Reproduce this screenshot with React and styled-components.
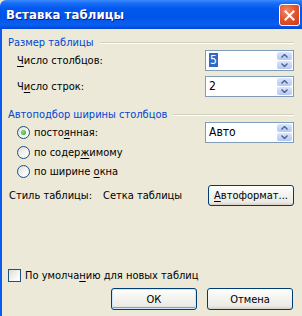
import styled, { createGlobalStyle } from 'styled-components';

const GlobalStyle = createGlobalStyle`
    html, body {
        margin: 0;
        padding: 0;
        background: #ece9d8;
    }
    #root {
        width: 302px;
        height: 316px;
        overflow: hidden;
    }
`;

const FONT = `"DejaVu Sans Condensed", "DejaVu Sans", "Liberation Sans", sans-serif`;

const Window = styled.div`
    position: relative;
    width: 302px;
    height: 316px;
    display: flex;
    flex-direction: column;
    font-family: ${FONT};
    font-size: 11px;
    color: #000;
    overflow: hidden;
`;

const TitleBar = styled.div`
    height: 29px;
    flex: none;
    display: flex;
    align-items: center;
    justify-content: space-between;
    padding: 0 2px 0 6px;
    background: linear-gradient(
        180deg,
        #3b8cff 0%,
        #1c6ef5 10%,
        #0058ee 30%,
        #0054e8 60%,
        #0a5ff0 85%,
        #0047d6 100%
    );
    border-top-left-radius: 6px;
`;

const Title = styled.span`
    color: #fff;
    font-weight: bold;
    font-size: 13px;
    letter-spacing: 0.1px;
    text-shadow: 1px 1px 0 #0a1e80;
`;

const CloseButton = styled.div`
    width: 19px;
    height: 20px;
    margin-top: 1px;
    border: 1px solid #fff;
    border-radius: 3px;
    background: radial-gradient(circle at 35% 30%, #f38a6a 0%, #e2572f 45%, #c63a17 100%);
    display: flex;
    align-items: center;
    justify-content: center;
`;

const Body = styled.div`
    flex: 1;
    border-left: 2px solid #0a5aef;
    padding: 6px 8px 0 6px;
    display: flex;
    flex-direction: column;
    background: #ece9d8;
`;

const GroupHeader = styled.div`
    height: 14px;
    display: flex;
    align-items: center;
    gap: 6px;
    margin-top: ${(p) => p.$top || 0}px;
    color: #0046d5;
    white-space: nowrap;

    &::after {
        content: '';
        flex: 1;
        height: 0;
        border-top: 1px solid #d0d0bf;
        border-bottom: 1px solid #fff;
        margin-top: 1px;
    }
`;

const Row = styled.div`
    height: ${(p) => p.$h || 21}px;
    margin-top: ${(p) => p.$top || 0}px;
    padding-left: ${(p) => p.$indent || 0}px;
    display: flex;
    align-items: center;
    justify-content: space-between;
`;

const Label = styled.span`
    white-space: nowrap;
`;

const Key = styled.span`
    text-decoration: underline;
    text-underline-offset: 2px;
`;

const SpinBox = styled.div`
    width: 89px;
    height: 21px;
    box-sizing: border-box;
    border: 1px solid #7f9db9;
    background: #fff;
    display: flex;
    align-items: center;
    padding: 1px;
`;

const SpinValue = styled.span`
    flex: 1;
    padding-left: 2px;
    font-size: 12px;
    line-height: 15px;
`;

const Selected = styled.span`
    background: #316ac5;
    color: #fff;
    padding: 0 1px;
`;

const SpinButtons = styled.div`
    width: 15px;
    height: 17px;
    display: flex;
    flex-direction: column;
    gap: 1px;
`;

const SpinHalf = styled.div`
    flex: 1;
    border-radius: 2px;
    background: linear-gradient(180deg, #dbe6fd 0%, #c1d3fb 60%, #b4c8f6 100%);
    display: flex;
    align-items: center;
    justify-content: center;
`;

const RadioGroup = styled.div`
    display: flex;
    flex-direction: column;
`;

const RadioCircle = styled.span`
    width: 13px;
    height: 13px;
    box-sizing: border-box;
    border-radius: 50%;
    border: 1px solid #1c5180;
    background: linear-gradient(135deg, #dcdcd7 0%, #f6f6f4 60%, #fff 100%);
    display: inline-flex;
    align-items: center;
    justify-content: center;
    flex: none;

    &::after {
        content: '';
        width: 5px;
        height: 5px;
        border-radius: 50%;
        background: ${(p) => (p.$on ? 'radial-gradient(circle at 40% 40%, #8de07a, #21a121)' : 'transparent')};
    }
`;

const Choice = styled.label`
    display: flex;
    align-items: center;
    gap: 4px;
    white-space: nowrap;
`;

const CheckBox = styled.span`
    width: 13px;
    height: 13px;
    box-sizing: border-box;
    border: 1px solid #1c5180;
    background: linear-gradient(135deg, #dcdcd7 0%, #f6f6f4 60%, #fff 100%);
    flex: none;
`;

const StyleInfo = styled.div`
    display: flex;
    gap: 11px;
    padding-left: 1px;
    white-space: nowrap;
`;

const XPButton = styled.button`
    width: 86px;
    height: ${(p) => p.$h || 22}px;
    box-sizing: border-box;
    border: 1px solid #003c74;
    border-radius: 3px;
    background: linear-gradient(180deg, #ffffff 0%, #f4f4f0 40%, #ecebe6 85%, #d6d0c5 100%);
    font-family: ${FONT};
    font-size: 11px;
    color: #000;
    padding: 0;
    box-shadow: ${(p) => (p.$def ? 'inset 0 0 0 1px #cee7ff, inset 0 -1px 0 1px #69a1f5' : 'none')};
`;

const Actions = styled.div`
    display: flex;
    justify-content: flex-end;
    gap: 10px;
    margin-top: 6px;
    padding-right: 1px;
`;

const Arrow = ({ up }) => (
    <svg width="7" height="4" viewBox="0 0 7 4">
        <path d={up ? 'M0.5 3.5 L3.5 0.5 L6.5 3.5' : 'M0.5 0.5 L3.5 3.5 L6.5 0.5'} fill="none" stroke="#4d6185" strokeWidth="1.4" />
    </svg>
);

const Spin = ({ children }) => (
    <SpinBox>
        <SpinValue>{children}</SpinValue>
        <SpinButtons>
            <SpinHalf><Arrow up /></SpinHalf>
            <SpinHalf><Arrow /></SpinHalf>
        </SpinButtons>
    </SpinBox>
);

function App() {
    return (
        <Window>
            <GlobalStyle />
            <TitleBar>
                <Title>Вставка таблицы</Title>
                <CloseButton>
                    <svg width="11" height="11" viewBox="0 0 11 11">
                        <path d="M1.5 1.5 L9.5 9.5 M9.5 1.5 L1.5 9.5" stroke="#fff" strokeWidth="2" strokeLinecap="square" />
                    </svg>
                </CloseButton>
            </TitleBar>
            <Body>
                <GroupHeader>Размер таблицы</GroupHeader>
                <Row $top={1} $indent={9}>
                    <Label><Key>Ч</Key>исло столбцов:</Label>
                    <Spin><Selected>5</Selected></Spin>
                </Row>
                <Row $top={5} $indent={9}>
                    <Label>Ч<Key>и</Key>сло строк:</Label>
                    <Spin>2</Spin>
                </Row>
                <GroupHeader $top={10}>Автоподбор ширины столбцов</GroupHeader>
                <RadioGroup>
                    <Row $top={1} $indent={9}>
                        <Choice><RadioCircle $on /><Label>посто<Key>я</Key>нная:</Label></Choice>
                        <Spin>Авто</Spin>
                    </Row>
                    <Row $h={19} $indent={9}>
                        <Choice><RadioCircle /><Label>по содер<Key>ж</Key>имому</Label></Choice>
                    </Row>
                    <Row $h={19} $indent={9}>
                        <Choice><RadioCircle /><Label>по ширине <Key>о</Key>кна</Label></Choice>
                    </Row>
                </RadioGroup>
                <Row $top={4}>
                    <StyleInfo>
                        <span>Стиль таблицы:</span>
                        <span>Сетка таблицы</span>
                    </StyleInfo>
                    <XPButton $h={21}><Key>А</Key>втоформат...</XPButton>
                </Row>
                <Row $top={62} $h={14}>
                    <Choice><CheckBox /><Label>По умолча<Key>н</Key>ию для новых таблиц</Label></Choice>
                </Row>
                <Actions>
                    <XPButton $def>ОК</XPButton>
                    <XPButton>Отмена</XPButton>
                </Actions>
            </Body>
        </Window>
    );
}

export default App;
